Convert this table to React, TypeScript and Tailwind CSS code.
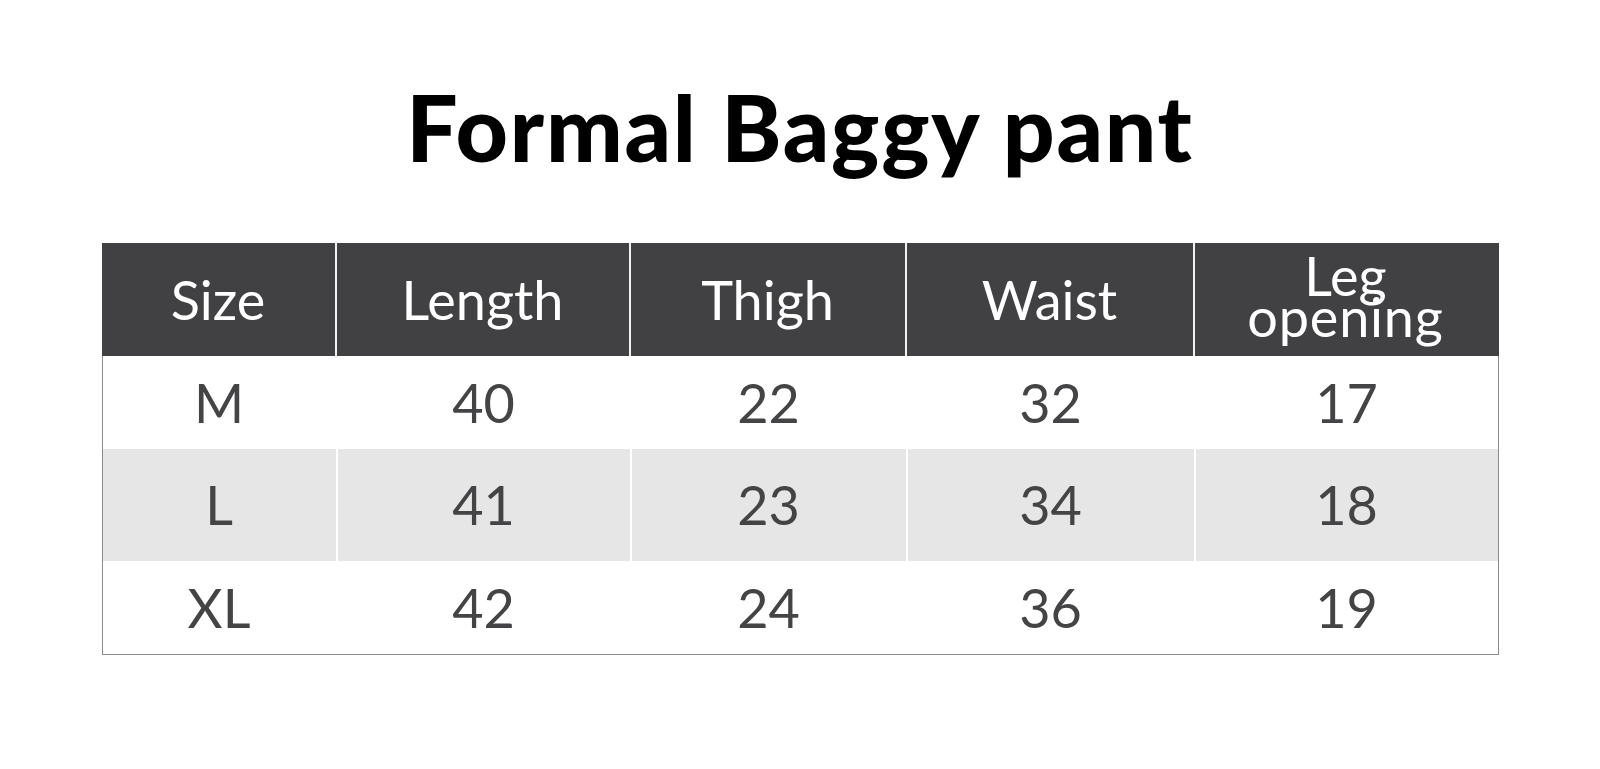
const columns = ["Size", "Length", "Thigh", "Waist", "Leg opening"];

const rows = [
  { size: "M", values: ["40", "22", "32", "17"], shaded: false, height: "h-[93px]" },
  { size: "L", values: ["41", "23", "34", "18"], shaded: true, height: "h-[112px]" },
  { size: "XL", values: ["42", "24", "36", "19"], shaded: false, height: "h-[93px]" },
];

const grid = "grid grid-cols-[233px_294px_276px_288px_304px]";

export default function App() {
  return (
    <div className="min-h-[769px] w-full bg-white font-['Lato',_'Open_Sans',_sans-serif]">
      <h1 className="pt-[72px] text-center text-[91px] leading-[110px] font-black tracking-[1.8px] text-black">
        Formal Baggy pant
      </h1>

      <div className="mx-auto mt-[61px] w-[1397px] border-x border-b border-[#8c8c8c]">
        {/* header */}
        <div className={`${grid} h-[113px] -mx-px bg-[#414042] text-white`}>
          {columns.map((col, i) => (
            <div
              key={col}
              className={`flex items-center justify-center text-center text-[54px] ${
                i > 0 ? "border-l-2 border-[#f0f0f0]" : ""
              }`}
            >
              {col === "Leg opening" ? (
                <span className="flex flex-col items-center pb-[6px]">
                  <span className="block h-[41px] leading-[44px]">Leg</span>
                  <span className="block leading-[44px] tracking-[0.8px]">opening</span>
                </span>
              ) : (
                <span className="leading-none">{col}</span>
              )}
            </div>
          ))}
        </div>

        {rows.map((row) => (
          <div
            key={row.size}
            className={`${grid} ${row.height} ${row.shaded ? "bg-[#e6e6e7]" : "bg-white"} text-[#444446]`}
          >
            {[row.size, ...row.values].map((v, i) => (
              <div
                key={i}
                className={`flex items-center justify-center text-[54px] leading-none ${
                  i > 0 ? "border-l-2 border-white" : ""
                }`}
              >
                {v}
              </div>
            ))}
          </div>
        ))}
      </div>
    </div>
  );
}
